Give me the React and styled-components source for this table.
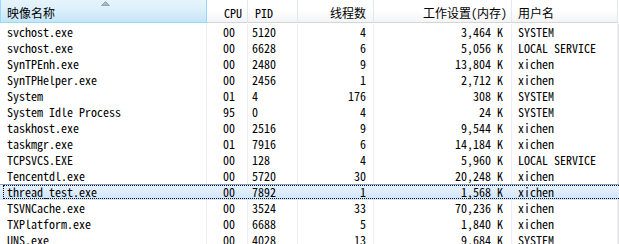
import styled, { createGlobalStyle } from "styled-components";

const GlobalStyle = createGlobalStyle`
  html, body {
    margin: 0;
    padding: 0;
    background: #ffffff;
  }
  body {
    width: 619px;
    height: 244px;
    overflow: hidden;
  }
`;

const FONT = `"Noto Sans Mono CJK SC", "Liberation Mono", "Noto Sans CJK SC", monospace`;

const COLUMNS = [
  { key: "name", title: "映像名称", width: 207, align: "left", head: "0 0 0 6px", cell: "0 0 0 7px", sorted: true },
  { key: "cpu", title: "CPU", width: 41, align: "left", head: "0 0 0 17px", cell: "0 0 0 16px" },
  { key: "pid", title: "PID", width: 50, align: "left", head: "0 0 0 7px", cell: "0 0 0 4px" },
  { key: "threads", title: "线程数", width: 76, align: "right", head: "0 7px 0 0", cell: "0 7px 0 0" },
  { key: "mem", title: "工作设置(内存)", width: 138, align: "right", head: "0 4px 0 0", cell: "0 8px 0 0" },
  { key: "user", title: "用户名", width: 106, align: "left", head: "0 0 0 6px", cell: "0 0 0 6px" },
];

const ROWS = [
  ["svchost.exe", "00", "5120", "4", "3,464 K", "SYSTEM"],
  ["svchost.exe", "00", "6628", "6", "5,056 K", "LOCAL SERVICE"],
  ["SynTPEnh.exe", "00", "2480", "9", "13,804 K", "xichen"],
  ["SynTPHelper.exe", "00", "2456", "1", "2,712 K", "xichen"],
  ["System", "01", "4", "176", "308 K", "SYSTEM"],
  ["System Idle Process", "95", "0", "4", "24 K", "SYSTEM"],
  ["taskhost.exe", "00", "2516", "9", "9,544 K", "xichen"],
  ["taskmgr.exe", "01", "7916", "6", "14,184 K", "xichen"],
  ["TCPSVCS.EXE", "00", "128", "4", "5,960 K", "LOCAL SERVICE"],
  ["Tencentdl.exe", "00", "5720", "30", "20,248 K", "xichen"],
  ["thread_test.exe", "00", "7892", "1", "1,568 K", "xichen"],
  ["TSVNCache.exe", "00", "3524", "33", "70,236 K", "xichen"],
  ["TXPlatform.exe", "00", "6688", "5", "1,840 K", "xichen"],
  ["UNS.exe", "00", "4028", "13", "9,684 K", "SYSTEM"],
];

const SELECTED = 10;

const template = COLUMNS.map((c) => `${c.width}px`).join(" ") + " 1fr";

export default function App() {
  return (
    <>
      <GlobalStyle />
      <ListView>
        <HeaderRow>
          {COLUMNS.map((col) => (
            <HeaderCell
              key={col.key}
              $align={col.align}
              $pad={col.head}
              $sorted={col.sorted}
            >
              {col.sorted && (
                <SortArrow width="9" height="5" viewBox="0 0 9 5">
                  <path d="M0.5 4.5 L4.5 0.5 L8.5 4.5 Z" fill="#a9b8c9" stroke="#8597ac" strokeWidth="0.8" />
                </SortArrow>
              )}
              {col.title}
            </HeaderCell>
          ))}
          <HeaderCell $pad="0" $last />
        </HeaderRow>
        <Body>
          {ROWS.map((row, i) => (
            <Row key={i} $selected={i === SELECTED}>
              {row.map((value, j) => (
                <Cell
                  key={j}
                  $align={COLUMNS[j].align}
                  $pad={COLUMNS[j].cell}
                  $selected={i === SELECTED}
                >
                  {value}
                </Cell>
              ))}
              <Cell $pad="0" $selected={i === SELECTED} $last />
              {i === SELECTED && <FocusRect />}
            </Row>
          ))}
        </Body>
      </ListView>
    </>
  );
}

const ListView = styled.div`
  width: 619px;
  height: 244px;
  overflow: hidden;
  font-family: ${FONT};
  font-size: 12px;
  color: #000000;
  background: #ffffff;
`;

const HeaderRow = styled.div`
  display: grid;
  grid-template-columns: ${template};
  height: 23px;
`;

const HeaderCell = styled.div`
  position: relative;
  box-sizing: border-box;
  display: flex;
  align-items: center;
  justify-content: ${(p) => (p.$align === "right" ? "flex-end" : "flex-start")};
  padding: ${(p) => p.$pad};
  padding-top: 2px;
  white-space: nowrap;
  color: #000000;
  background: ${(p) =>
    p.$sorted
      ? "linear-gradient(#e6f4fc 0%, #dcf0fb 45%, #c4e5f6 100%)"
      : "linear-gradient(#ffffff 0%, #ffffff 45%, #f3f4f6 100%)"};
  border-bottom: 1px solid ${(p) => (p.$sorted ? "#96d9f9" : "#d5d5d5")};
  border-right: 1px solid ${(p) => (p.$sorted ? "#96d9f9" : p.$last ? "transparent" : "#e3e8ee")};
  border-left: ${(p) => (p.$sorted ? "1px solid #96d9f9" : "none")};
`;

const SortArrow = styled.svg`
  position: absolute;
  left: 100px;
  top: 1px;
`;

const Body = styled.div`
  padding-top: 1px;
`;

const Row = styled.div`
  position: relative;
  display: grid;
  grid-template-columns: ${template};
  height: 16px;
  box-sizing: border-box;
  background: ${(p) =>
    p.$selected ? "linear-gradient(#e9f2fd 0%, #dcebfc 50%, #cfe4fa 100%)" : "transparent"};
  border-top: ${(p) => (p.$selected ? "1px solid #7da2ce" : "none")};
`;

const Cell = styled.div`
  box-sizing: border-box;
  display: flex;
  align-items: center;
  justify-content: ${(p) => (p.$align === "right" ? "flex-end" : "flex-start")};
  padding: ${(p) => p.$pad};
  white-space: nowrap;
  overflow: hidden;
  line-height: 16px;
  margin-top: ${(p) => (p.$selected ? "-1px" : "0")};
  border-right: 1px solid
    ${(p) => (p.$selected ? "transparent" : p.$last ? "#e2e2e2" : "#edf1f7")};
`;

const FocusRect = styled.div`
  position: absolute;
  left: 3px;
  right: 0;
  top: 0;
  bottom: 1px;
  border: 1px dotted #000000;
  border-right: none;
  pointer-events: none;
`;
